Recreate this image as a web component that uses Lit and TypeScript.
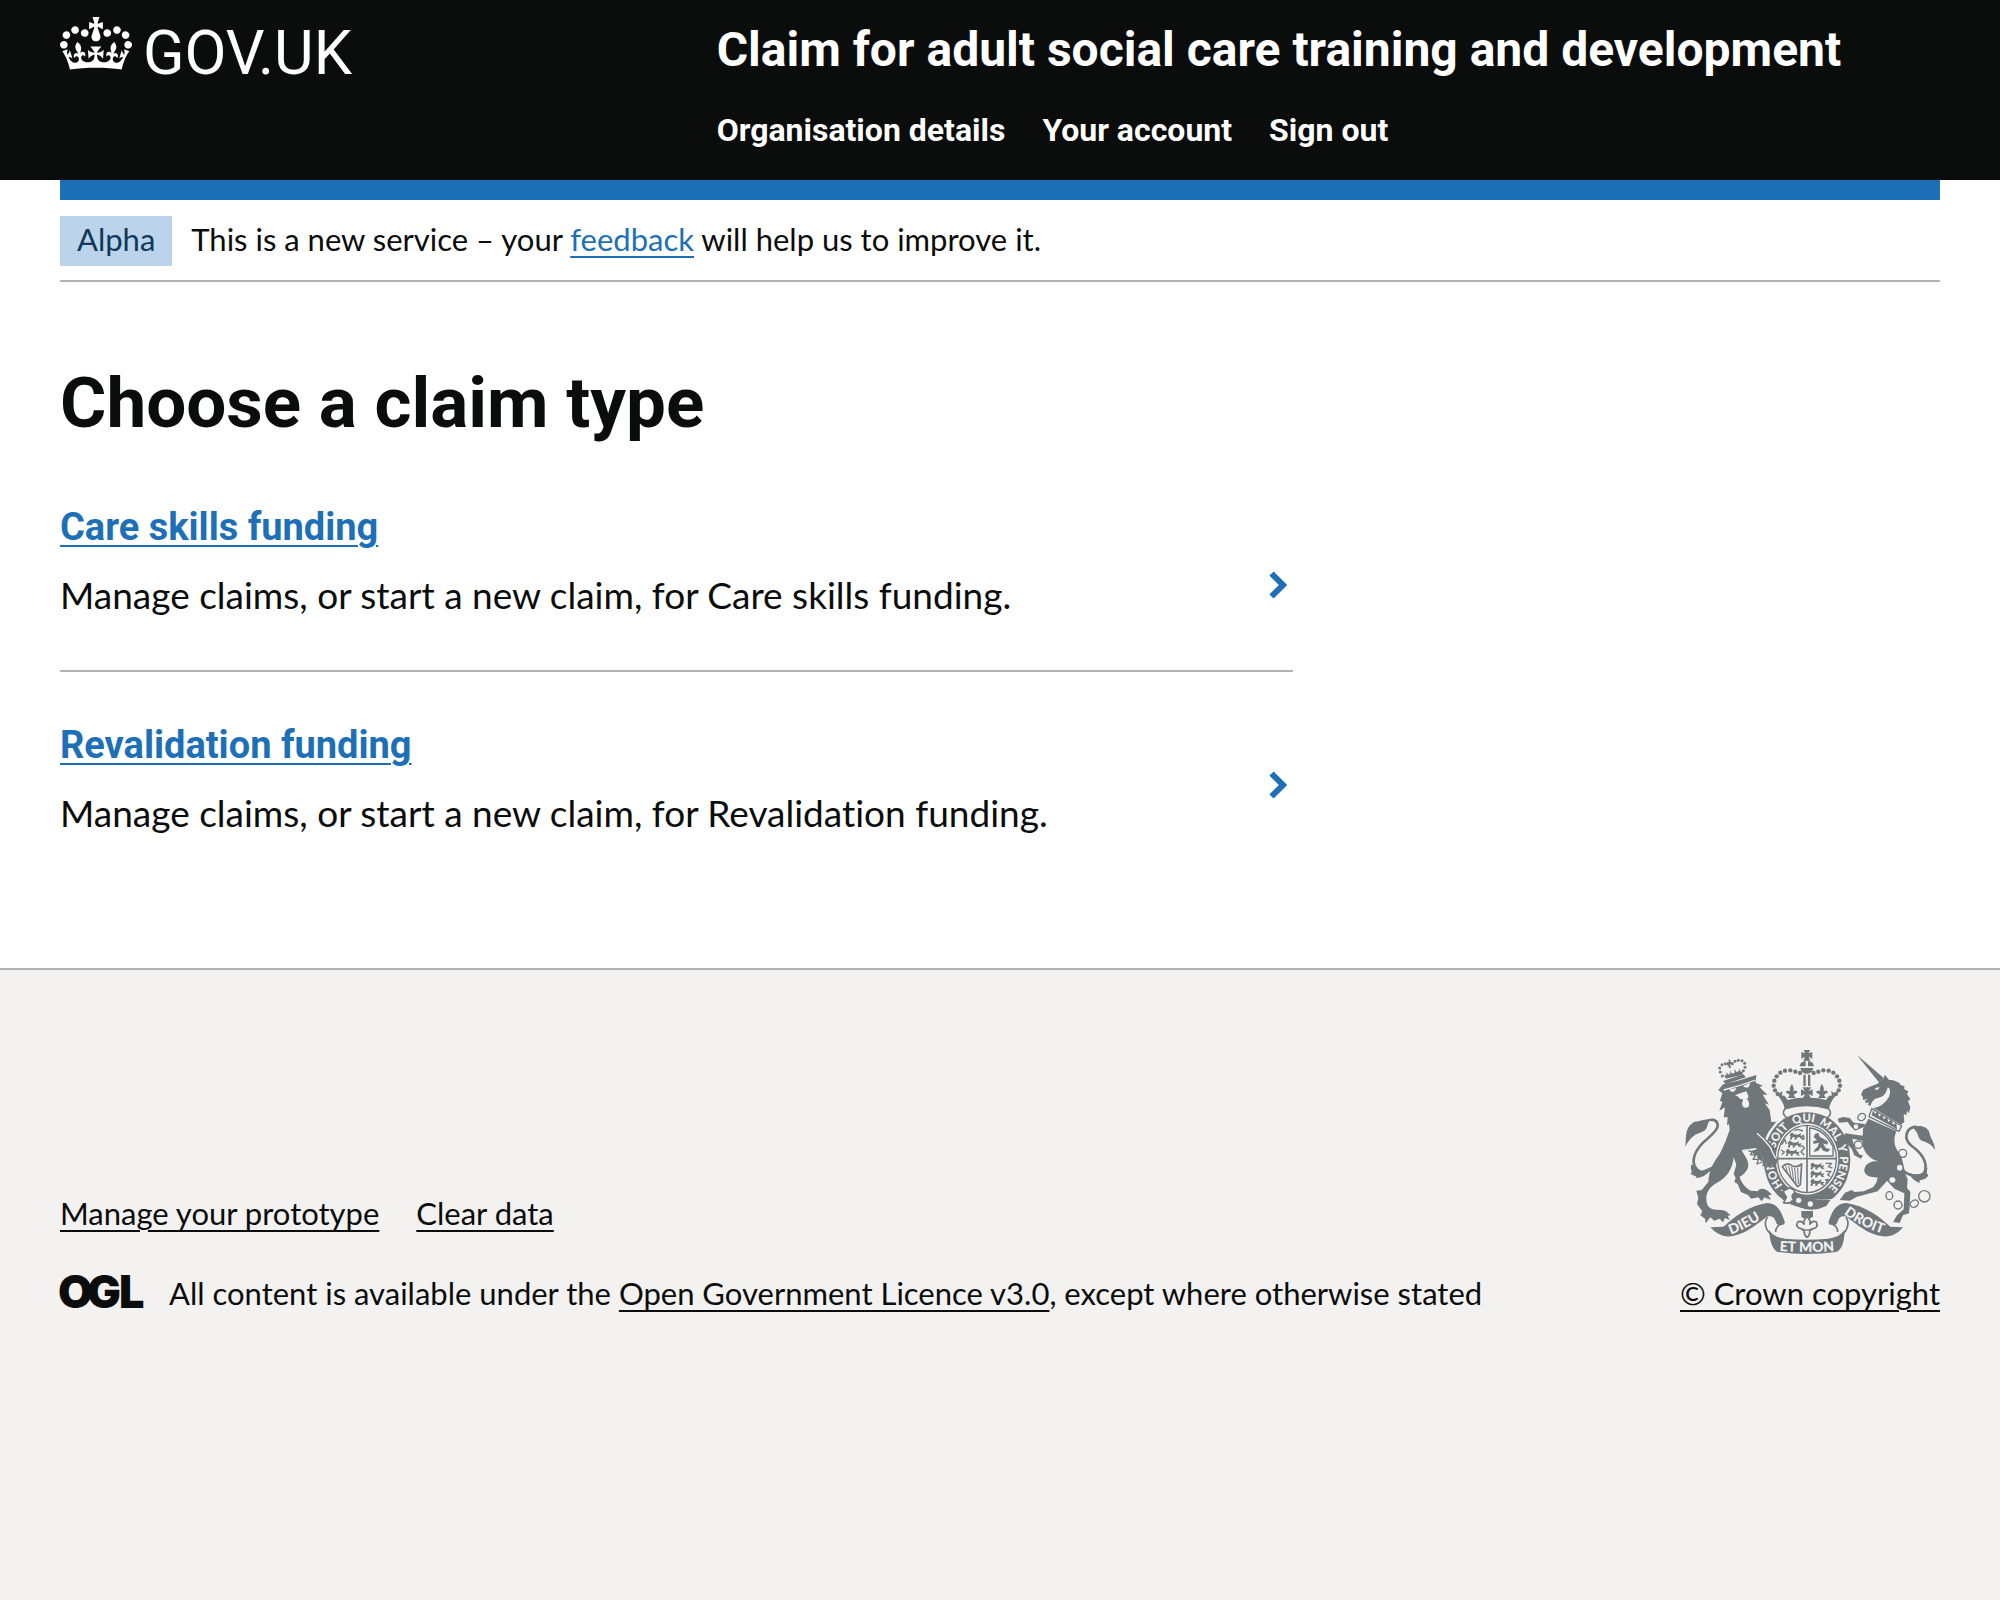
import { LitElement, html, svg, css } from "lit";
import { customElement } from "lit/decorators.js";

interface Claim {
  title: string;
  text: string;
}

const NAV = ["Organisation details", "Your account", "Sign out"];

const CLAIMS: Claim[] = [
  {
    title: "Care skills funding",
    text: "Manage claims, or start a new claim, for Care skills funding.",
  },
  {
    title: "Revalidation funding",
    text: "Manage claims, or start a new claim, for Revalidation funding.",
  },
];

const FOOTER_LINKS = ["Manage your prototype", "Clear data"];

// Words on the garter and how far along its ring each one starts.
const GARTER: [string, number][] = [
  ["HON", 0],
  ["SOIT", 116],
  ["QUI", 210],
  ["MAL", 288],
  ["Y", 376],
  ["PENSE", 408],
];

@customElement("royal-arms")
export class RoyalArms extends LitElement {
  static styles = css`
    :host {
      display: block;
      width: 250px;
      height: 204px;
    }
    svg {
      display: block;
      width: 100%;
      height: 100%;
      overflow: visible;
      fill: #6f777b;
    }
    .line {
      fill: none;
      stroke: #6f777b;
      stroke-width: 5;
      stroke-linejoin: round;
    }
    .thin {
      stroke-width: 3;
    }
    .mid {
      stroke-width: 4;
    }
    .tail {
      stroke-width: 8;
    }
    .paper {
      fill: #f3f2f1;
    }
    .gap {
      fill: none;
      stroke: #f3f2f1;
      stroke-width: 4;
    }
    .paper-edge {
      fill: #f3f2f1;
      stroke: #6f777b;
      stroke-width: 5;
    }
    .motto {
      fill: #f3f2f1;
      font-family: Lato, "Open Sans", sans-serif;
      font-weight: 900;
      font-size: 42px;
    }
    .garter {
      font-size: 34px;
    }
  `;

  private half() {
    const beads = [
      [417, 129], [403, 125], [388, 121], [372, 122], [358, 128],
      [347, 139], [340, 152], [338, 167], [342, 181], [350, 192],
    ];
    return svg`
      ${beads.map(([x, y]) => svg`<circle cx=${x} cy=${y} r="6.5" />`)}
      <path d="M438 60 H428 L432 70 L421 66 V86 L432 80 L427 92 H438Z" />
      <path d="M416 109 Q418 94 434 93 V109Z" />
      <path d="M418 114 H438 V132 Q420 130 418 114Z" />
      <path d="M427 134 H434 V168 H427Z" />
      <path d="M438 172 H424 L432 183 L420 178 V198 L432 192 L426 204 H438Z" />
      <path d="M392 162 Q384 173 387 184 Q378 178 374 188 Q382 188 386 196 L380 204 H404 L398 196 Q402 188 410 188 Q406 178 397 184 Q401 173 392 162Z" />
      <path d="M350 196 L364 182 L363 198 Q370 194 374 202 L380 210 Q408 202 438 204 V230 Q402 230 372 240 Q368 216 350 196Z" />`;
  }

  private lion() {
    return svg`
      <path class="line tail" d="M170 392 C156 418 134 434 112 422 C88 402 96 370 124 340 C158 310 172 296 170 284 C167 266 150 267 132 274" />
      <path d="M72 352 C76 336 72 322 78 302 C84 284 98 274 112 274 C126 268 138 268 146 272 C136 282 144 300 118 308 C98 313 84 328 72 352Z" />
      <path d="M91 403 C86 422 98 428 88 430 C96 440 108 436 106 444 C122 444 142 434 158 408 L120 424Z" />
      <path d="M172 180 L186 163 L236 151 L286 135 L284 158 L305 167 L296 172 L319 194 L305 194 L324 224 L311 220
        L326 240 L331 276 L346 275 L322 306 L313 326 L340 352 L349 394 L342 416 L334 402 L326 416 L316 400 L304 412
        L306 392 L300 366 L284 354 L242 360 C250 376 260 386 262 404 C262 422 246 434 236 440
        C240 458 254 474 270 482 L290 484 C298 472 312 476 322 484 L333 494 L322 496 L330 510 L310 502 L302 514 L292 502 L270 506
        L262 496 L240 486 L230 462 L220 456 L224 444 L218 432 L226 404 L218 382 C214 420 196 444 168 458 C138 474 130 500 140 526
        C150 546 174 536 194 543 L209 556 L200 557 L206 570 L192 564 L186 577 L176 566 L160 572 L148 562 L134 580 L132 566
        L118 556 L124 544 L108 522 L112 504 L106 482 L122 480 L142 456 C144 420 158 396 176 372 C190 346 198 322 206 300
        L204 282 L198 286 L200 262 L188 262 L192 232 L175 242 L184 216 L177 212 L184 190Z" />
      <path class="paper" d="M204 178 L226 174 Q222 186 212 186Z M246 168 L268 158 L264 170 Q254 176 246 168Z" />
      <path class="paper" d="M222 196 L238 190 L256 184 Q264 196 262 206 L256 204 Q270 222 262 231 Q246 238 243 222 L246 208 L236 206 L232 200Z" />
      <path class="gap" d="M188 180 Q236 168 284 150" />
      <path class="gap" d="M288 310 Q310 328 328 352 Q338 376 345 386" />
      <path class="line mid" d="M262 362 L274 366 L268 374 L284 376 L276 388 L292 388 L288 402 L304 396" />
      <path d="M272 362 L300 354 L306 396 L290 386 L288 376 L278 374Z" />
      <path d="M186 153 L248 133 L254 142 L194 162Z" />
      <path d="M194 146 L190 134 L197 136 L196 126 L203 134 L208 130 V120 L213 131 L221 128 L220 116 L227 127 L234 122 L233 114 L240 126 L247 122 L243 135Z" />
      ${[[178, 126], [176, 114], [183, 104], [193, 101], [203, 104], [214, 101], [222, 94], [232, 91], [243, 92], [251, 100], [252, 112], [184, 138], [247, 122]].map(
        ([x, y]) => svg`<circle cx=${x} cy=${y} r="4.5" />`
      )}
      <path d="M202 88 L209 91 L208 96 L214 97 L213 103 L207 102 L210 114 L204 115 L203 104 L197 103 L198 97 L204 96Z" />`;
  }

  private unicorn() {
    return svg`
      <path d="M588 75 L668 144 L656 160Z" />
      <path d="M600 194 L606 180 L626 170 L648 162 L666 148 L672 134 L684 150 C700 150 716 156 720 166 L730 168 L730 178 L742 184
        L738 192 L748 208 L741 214 L748 232 L744 250 L738 242 L736 256 L728 252 L730 276 L720 284 L636 234 C660 232 676 214 684 200
        C690 186 688 176 680 172 C676 190 668 202 650 204 C640 206 634 212 628 228 L620 224 L624 216 L614 220 L612 212 L622 206
        L606 210 L606 202Z" />
      <path class="paper" d="M640 178 Q648 170 656 172 L650 180Z" />
      <path class="line mid" d="M632 236 L722 288 L714 304 L624 260Z" />
      <path d="M632 256 L636 240 L642 252 L650 244 L654 260 L664 252 L668 268 L678 260 L682 276 L692 268 L696 284 L706 278 L708 298Z" />
      <path d="M622 266 L706 304 C696 328 700 350 712 366 C730 388 726 420 740 448 L738 474 L748 486 L746 526 L744 550 L726 556
        L716 579 L696 576 L708 556 L728 538 L730 490 L700 476 L678 452 L672 460 L650 484 L588 500 L566 512 L536 510 L552 488
        L572 480 L580 486 L608 484 L636 472 L646 458 L650 442 C618 444 604 428 612 412 C618 396 638 392 652 394 C632 388 612 374 604 344 L606 296Z" />
      <path d="M610 290 L582 302 L570 290 L560 276 L534 278 L530 266 L546 261 L566 264 L578 278 L612 282Z" />
      <path d="M612 334 L574 326 L580 350 L596 374 L606 376 L600 386 L580 376 L572 356 L560 344 L548 322 L552 310 L584 314 L612 318Z" />
      <path class="line tail" d="M724 420 C744 438 776 446 790 428 C804 396 778 366 752 348 C724 324 736 292 766 290" />
      <path d="M752 291 C780 284 800 290 806 310 C808 328 820 332 822 360 C812 342 796 336 782 332 C768 324 776 308 752 291Z" />
      <path d="M742 428 Q752 448 776 460 Q774 450 780 450 Q800 446 802 434 Q794 434 800 412 L786 428 Q768 438 742 428Z" />
      <g class="line mid">
        <ellipse cx="602" cy="261" rx="12" ry="10" transform="rotate(-35 602 261)" />
        <ellipse cx="592" cy="344" rx="12" ry="11" />
        <circle cx="725" cy="370" r="12" />
        <ellipse cx="685" cy="497" rx="10" ry="12" />
        <circle cx="711" cy="525" r="12" />
        <ellipse cx="760" cy="521" rx="13" ry="10" transform="rotate(-35 760 521)" />
        <circle cx="790" cy="499" r="17" />
      </g>
      <circle class="paper" cx="585" cy="290" r="7" />
      <ellipse class="paper" cx="716" cy="413" rx="8" ry="9" />
      <ellipse class="paper" cx="694" cy="450" rx="9" ry="8" />`;
  }

  private shield() {
    const beast = (x: number, y: number) => svg`
      <path transform="translate(${x} ${y})"
        d="M0 8 L4 1 L10 0 L12 5 L24 6 L34 1 L32 9 L42 8 L38 15 L44 20 L34 19 L30 13 L22 15 L20 21 L14 20 L16 14 L8 14 L6 21 L0 20 L3 13Z" />`;
    return svg`
      <ellipse cx="438" cy="389" rx="130" ry="145" />
      <ellipse class="paper" cx="438" cy="387" rx="94" ry="107" />
      <ellipse class="line mid" cx="438" cy="387" rx="88" ry="101" />
      <path class="line" d="M438 286 V488 M350 386 H526" />
      ${beast(386, 308)}${beast(380, 332)}${beast(374, 357)}
      ${beast(448, 398)}${beast(448, 422)}${beast(448, 447)}
      <path class="line mid" d="M400 303 L410 298 L426 303 M426 314 L430 324 L424 330 M362 344 L372 328 L376 342 M360 360 L370 366 L362 374 M422 346 L430 354 L420 366 L430 376" />
      <path class="line mid" d="M494 400 L512 400 L502 410 L514 414 M494 424 L510 424 L500 434 L508 440 M492 450 L502 448 L494 460" />
      <path class="line mid" d="M446 294 Q490 298 516 350 V378 H446Z" />
      <path d="M462 312 L472 308 L476 320 L490 328 L502 336 L498 344 L486 340 L494 354 L508 358 L500 366 L486 362 L480 352 L472 362 L458 366
        L462 358 L470 350 L474 338 L458 342 L456 334 L468 330 L458 322Z" />
      <path class="line" d="M364 410 Q378 396 392 406 Q406 416 422 402 L418 464 L410 470 Z" />
      <path class="line thin" d="M374 406 L380 432 M383 406 L390 442 M392 410 L398 452 M401 414 L405 460 M410 414 L412 462" />`;
  }

  private ribbons() {
    return svg`
      <path d="M148 592 L188 590 C220 560 262 528 318 519 C352 520 362 548 372 578 C356 590 346 586 344 574 C340 560 330 556 318 560
        C290 580 268 600 236 612 C206 624 178 624 148 592Z" />
      <path class="line" d="M370 580 C352 582 344 594 344 606 M320 562 C308 572 312 600 330 612" />
      <path d="M726 592 L688 590 C656 560 614 528 556 519 C522 520 512 548 502 578 C518 590 528 586 530 574 C534 560 544 556 556 560
        C584 580 606 600 638 612 C668 624 700 624 726 592Z" />
      <path class="line" d="M504 580 C522 582 530 594 530 606 M554 562 C566 572 562 600 544 612" />
      <path d="M324 600 Q338 622 372 626 Q437 632 502 626 Q536 622 551 600 Q550 656 526 666 Q437 678 350 666 Q328 656 324 600Z" />
      <path id="dieu" fill="none" d="M210 614 Q262 594 324 552" />
      <path id="droit" fill="none" d="M548 552 Q606 596 690 618" />
      <path id="mon" fill="none" d="M340 662 Q437 670 536 662" />
      <text class="motto"><textPath href="#dieu">DIEU</textPath></text>
      <text class="motto"><textPath href="#droit">DROIT</textPath></text>
      <text class="motto" text-anchor="middle"><textPath href="#mon" startOffset="50%">ET MON</textPath></text>`;
  }

  render() {
    return html`<svg viewBox="72 60 750 612" role="img" aria-label="Royal coat of arms">
      ${this.half()}
      <g transform="matrix(-1 0 0 1 875 0)">${this.half()}</g>
      ${this.shield()}
      <path class="paper-edge" d="M372 236 Q437 216 503 236 Q516 252 498 264 Q437 234 378 264 Q360 252 372 236Z" />
      <path id="round" fill="none" d="M366 466 A99 113 0 1 1 480 490" />
      ${GARTER.map(
        ([word, at]) => svg`<text class="motto garter"><textPath href="#round" startOffset=${at}>${word}</textPath></text>`
      )}
      ${this.lion()} ${this.unicorn()}
      <path class="gap" d="M360 480 Q430 520 520 508" />
      <path d="M372 482 Q430 510 508 510 L496 528 Q440 556 380 512Z" />
      <path class="paper-edge" d="M366 484 L384 474 Q404 478 400 490 Q388 496 398 508 Q386 524 368 518 L376 502Z" />
      <circle class="paper" cx="413" cy="511" r="8" />
      <circle class="paper" cx="448" cy="522" r="8" />
      <path d="M421 543 H456 V560 L446 566 L438 554 L430 566 L421 560Z" />
      <path class="paper-edge" d="M438 558 L448 574 L446 584 Q454 570 466 576 Q474 592 456 596 L446 600 Q448 616 438 622
        Q428 616 430 600 L420 596 Q402 592 410 576 Q422 570 430 584 L428 574Z" />
      <path class="line mid" d="M422 600 H454" />
      ${this.ribbons()}
    </svg>`;
  }
}

@customElement("app-root")
export class AppRoot extends LitElement {
  static styles = css`
    :host {
      display: flex;
      flex-direction: column;
      min-height: 100vh;
      background: #fff;
      color: #0b0c0c;
      font-family: Lato, "Open Sans", sans-serif;
      font-size: 31px;
      line-height: 40px;
      font-variant-ligatures: none;
    }
    h1,
    h2,
    p,
    ul {
      margin: 0;
      padding: 0;
    }
    ul {
      list-style: none;
    }
    a {
      color: inherit;
      text-decoration: underline;
      text-decoration-thickness: 2px;
      text-underline-offset: 5px;
    }
    .blue {
      color: #1d70b8;
    }
    .header {
      background: #0b0c0c;
      color: #fff;
    }
    .header-inner {
      display: flex;
      margin: 0 60px;
      padding-bottom: 30px;
      font-family: Roboto, "Open Sans", sans-serif;
      font-weight: 700;
    }
    .header a {
      text-decoration: none;
    }
    .logo-cell {
      box-sizing: border-box;
      width: 33.3333%;
      padding-top: 17px;
    }
    .logo {
      display: inline-flex;
      gap: 11px;
    }
    .crown {
      width: 72px;
      height: 53px;
      fill: #fff;
    }
    .wordmark {
      font-size: 61px;
      font-weight: 400;
      line-height: 72px;
    }
    .service-cell {
      flex: 1;
      padding: 20px 0 0 30px;
    }
    .service {
      display: block;
      font-size: 48px;
      line-height: 60px;
    }
    .nav {
      display: flex;
      gap: 37px;
      margin-top: 30px;
      font-size: 32px;
    }
    .bar {
      height: 20px;
      margin: 0 60px;
      background: #1d70b8;
    }
    .phase {
      display: flex;
      align-items: baseline;
      gap: 19px;
      margin: 0 60px;
      padding: 16px 0 14px;
      border-bottom: 2px solid #b1b4b6;
    }
    .tag {
      padding: 3px 17px 7px;
      background: #bbd4ea;
      color: #0f385c;
      font-weight: 400;
    }
    .main {
      width: calc((100% - 120px) * 2 / 3 - 20px);
      margin: 0 60px;
      padding: 80px 0 116px;
    }
    .title {
      font-family: Roboto, "Open Sans", sans-serif;
      font-size: 71px;
      font-weight: 700;
      line-height: 82px;
    }
    .claims {
      display: grid;
      gap: 46px;
      margin-top: 56px;
    }
    .claim {
      display: flex;
      align-items: center;
      justify-content: space-between;
      padding-right: 6px;
    }
    .claim-body {
      display: grid;
      gap: 16px;
      padding-bottom: 14px;
    }
    .claim:not(:last-child) {
      border-bottom: 2px solid #b1b4b6;
    }
    .claim:not(:last-child) .claim-body {
      padding-bottom: 50px;
    }
    .claim-title {
      font-family: Roboto, "Open Sans", sans-serif;
      font-size: 38px;
      font-weight: 700;
      line-height: 54px;
    }
    .claim-text {
      font-size: 37px;
      line-height: 50px;
    }
    .chevron {
      width: 18px;
      height: 28px;
      fill: none;
      stroke: #1d70b8;
      stroke-width: 6;
    }
    .footer {
      flex: 1;
      display: flex;
      justify-content: space-between;
      align-items: flex-start;
      padding: 80px 60px 60px;
      border-top: 2px solid #b1b4b6;
      background: #f3f2f1;
    }
    .meta {
      padding-top: 143px;
    }
    .links {
      display: flex;
      gap: 37px;
    }
    .licence {
      display: flex;
      gap: 27px;
      margin-top: 40px;
    }
    .ogl {
      width: 82px;
      height: 36px;
      fill: #0b0c0c;
      overflow: visible;
      font-family: Inter, sans-serif;
      font-size: 45px;
      font-weight: 900;
    }
    .crown-copyright {
      display: flex;
      flex-direction: column;
      align-items: center;
      gap: 19px;
    }
  `;

  render() {
    return html`
      <header class="header">
        <div class="header-inner">
          <div class="logo-cell">
            <a class="logo" href="#">
              <svg class="crown" viewBox="0 0 132 97" aria-hidden="true">
                <path fill-rule="evenodd" d="M25 30.2c3.5 1.5 7.7-.2 9.1-3.7 1.5-3.6-.2-7.8-3.9-9.2-3.6-1.4-7.6.3-9.1 3.9-1.4 3.5.3 7.5 3.9 9zM9 39.5c3.6 1.5 7.8-.2 9.2-3.7 1.5-3.6-.2-7.8-3.9-9.1-3.6-1.5-7.6.2-9.1 3.8-1.4 3.5.3 7.5 3.8 9zM4.4 57.2c3.5 1.5 7.7-.2 9.1-3.8 1.5-3.6-.2-7.7-3.9-9.1-3.5-1.5-7.6.3-9.1 3.8-1.4 3.5.3 7.6 3.9 9.1zm38.3-21.4c3.5 1.5 7.7-.2 9.1-3.8 1.5-3.6-.2-7.7-3.9-9.1-3.6-1.5-7.6.3-9.1 3.8-1.3 3.6.4 7.7 3.9 9.1zm64.4-5.6c-3.6 1.5-7.8-.2-9.1-3.7-1.5-3.6.2-7.8 3.8-9.2 3.6-1.4 7.7.3 9.2 3.9 1.3 3.5-.4 7.5-3.9 9zm15.9 9.3c-3.6 1.5-7.7-.2-9.1-3.7-1.5-3.6.2-7.8 3.7-9.1 3.6-1.5 7.7.2 9.2 3.8 1.5 3.5-.3 7.5-3.8 9zm4.7 17.7c-3.6 1.5-7.8-.2-9.2-3.8-1.5-3.6.2-7.7 3.9-9.1 3.6-1.5 7.7.3 9.2 3.8 1.3 3.5-.4 7.6-3.9 9.1zM89.3 35.8c-3.6 1.5-7.8-.2-9.2-3.8-1.4-3.6.2-7.7 3.9-9.1 3.6-1.5 7.7.3 9.2 3.8 1.4 3.6-.3 7.7-3.9 9.1zM69.7 17.7l8.9 4.7V9.3l-8.9 2.8c-.2-.3-.5-.6-.9-.9L72.4 0H59.6l3.5 11.2c-.3.3-.6.5-.9.9l-8.8-2.8v13.1l8.8-4.7c.3.3.6.7.9.9l-5 15.4v.1c-.2.8-.4 1.6-.4 2.4 0 4.1 3.1 7.5 7 8.1h.2c.3 0 .7.1 1 .1.4 0 .7 0 1-.1h.2c4-.6 7.1-4.1 7.1-8.1 0-.8-.1-1.7-.4-2.4V34l-5.1-15.4c.4-.2.7-.6 1-.9zM66 92.8c16.9 0 32.8 1.1 47.1 3.2 4-16.9 8.9-26.7 14-33.5l-9.6-3.4c1 4.9 1.1 7.2 0 10.2-1.5-1.4-3-4.3-4.2-8.7L108.6 76c2.8-2 5-3.2 7.5-3.3-4.4 9.4-10 11.9-13.6 11.2-4.3-.8-6.3-4.6-5.6-7.9 1-4.7 5.7-5.9 8-.5 4.3-8.7-3-11.4-7.6-8.8 7.1-7.2 7.9-13.5 2.1-21.1-8 6.1-8.1 12.3-4.5 20.8-4.7-5.4-12.1-2.5-9.5 6.2 3.4-5.2 7.9-2 7.2 3.1-.6 4.3-6.4 7.8-13.5 7.2-10.3-.9-10.9-8-11.2-13.8 2.5-.5 7.1 1.8 11 7.3L80.2 60c-4.1 4.4-8 5.3-12.3 5.4 1.4-4.4 8-11.6 8-11.6H55.5s6.4 7.2 7.9 11.6c-4.2-.1-8-1-12.3-5.4l1.4 16.4c3.9-5.5 8.5-7.7 10.9-7.3-.3 5.8-.9 12.8-11.1 13.8-7.2.6-12.9-2.9-13.5-7.2-.7-5 3.8-8.3 7.1-3.1 2.7-8.7-4.6-11.6-9.4-6.2 3.7-8.5 3.6-14.7-4.6-20.8-5.8 7.6-5 13.9 2.2 21.1-4.7-2.6-11.9.1-7.7 8.8 2.3-5.5 7.1-4.2 8.1.5.7 3.3-1.3 7.1-5.7 7.9-3.5.7-9-1.8-13.5-11.2 2.5.1 4.7 1.3 7.5 3.3l-4.7-15.4c-1.2 4.4-2.7 7.2-4.3 8.7-1.1-3-.9-5.3 0-10.2l-9.5 3.4c5 6.9 9.9 16.7 14 33.5 14.8-2.1 30.8-3.2 47.7-3.2z" />
              </svg>
              <span class="wordmark">GOV.UK</span>
            </a>
          </div>
          <div class="service-cell">
            <a class="service" href="#">Claim for adult social care training and development</a>
            <nav>
              <ul class="nav">
                ${NAV.map((item) => html`<li><a href="#">${item}</a></li>`)}
              </ul>
            </nav>
          </div>
        </div>
      </header>
      <div class="bar"></div>
      <div class="phase">
        <strong class="tag">Alpha</strong>
        <span>This is a new service – your <a class="blue" href="#">feedback</a> will help us to improve it.</span>
      </div>
      <main class="main">
        <h1 class="title">Choose a claim type</h1>
        <ul class="claims">
          ${CLAIMS.map(
            (claim) => html`<li class="claim">
              <div class="claim-body">
                <h2 class="claim-title"><a class="blue" href="#">${claim.title}</a></h2>
                <p class="claim-text">${claim.text}</p>
              </div>
              <svg class="chevron" viewBox="0 0 18 28" aria-hidden="true">
                <path d="M2.5 2.5 L14 14 L2.5 25.5" />
              </svg>
            </li>`
          )}
        </ul>
      </main>
      <footer class="footer">
        <div class="meta">
          <ul class="links">
            ${FOOTER_LINKS.map((item) => html`<li><a href="#">${item}</a></li>`)}
          </ul>
          <div class="licence">
            <svg class="ogl" viewBox="0 0 82 36" aria-hidden="true">
              <text y="35" x="-2 27 59">OGL</text>
            </svg>
            <span>All content is available under the <a href="#">Open Government Licence v3.0</a>, except where otherwise stated</span>
          </div>
        </div>
        <div class="crown-copyright">
          <royal-arms></royal-arms>
          <a href="#">© Crown copyright</a>
        </div>
      </footer>
    `;
  }
}
